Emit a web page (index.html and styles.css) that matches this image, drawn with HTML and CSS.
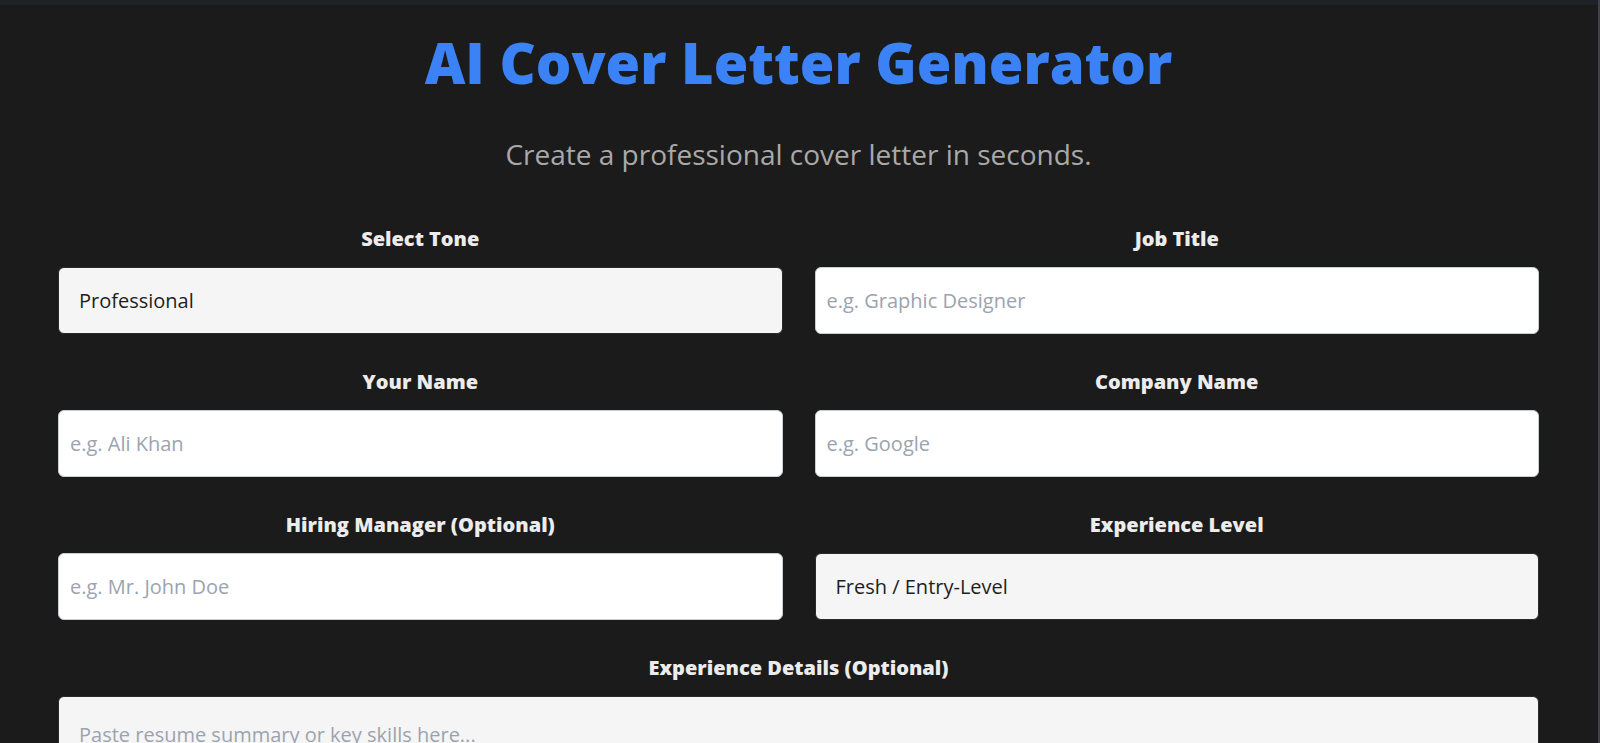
FILE: index.html
```html
<!DOCTYPE html>
<html lang="en">
<head>
<meta charset="utf-8">
<title>AI Cover Letter Generator</title>
<link rel="stylesheet" href="styles.css">
</head>
<body>
<div class="topbar"></div>
<main class="page">
  <h1 class="title">AI Cover Letter Generator</h1>
  <p class="subtitle">Create a professional cover letter in seconds.</p>
  <form class="form">
    <div class="field">
      <label class="label">Select Tone</label>
      <select class="control select">
        <option>Professional</option>
      </select>
    </div>
    <div class="field">
      <label class="label">Job Title</label>
      <input class="control input" type="text" placeholder="e.g. Graphic Designer">
    </div>
    <div class="field">
      <label class="label">Your Name</label>
      <input class="control input" type="text" placeholder="e.g. Ali Khan">
    </div>
    <div class="field">
      <label class="label">Company Name</label>
      <input class="control input" type="text" placeholder="e.g. Google">
    </div>
    <div class="field">
      <label class="label">Hiring Manager (Optional)</label>
      <input class="control input" type="text" placeholder="e.g. Mr. John Doe">
    </div>
    <div class="field">
      <label class="label">Experience Level</label>
      <select class="control select">
        <option>Fresh / Entry-Level</option>
      </select>
    </div>
    <div class="field wide">
      <label class="label">Experience Details (Optional)</label>
      <textarea class="control textarea" placeholder="Paste resume summary or key skills here..."></textarea>
    </div>
  </form>
</main>
</body>
</html>
```

FILE: styles.css
```css
html, body {
  margin: 0;
  padding: 0;
  background: #1b1b1b;
  overflow: hidden;
}

body {
  font-family: "Open Sans", "Noto Sans", "Liberation Sans", sans-serif;
  color: #ececec;
  border-right: 2px solid #3d434b;
  min-height: 743px;
  box-sizing: border-box;
}

.topbar {
  height: 5px;
  background: #1f2329;
}

.page {
  padding: 24px 59px 0 58px;
}

.title {
  margin: 0;
  font-size: 56px;
  line-height: 67px;
  font-weight: 800;
  color: #3b82f6;
  text-align: center;
}

.subtitle {
  margin: 40px 0 0;
  font-size: 28px;
  line-height: 37px;
  font-weight: 400;
  color: #a9a9a9;
  text-align: center;
}

.form {
  margin-top: 52px;
  display: grid;
  grid-template-columns: 1fr 1fr;
  column-gap: 32px;
  row-gap: 34px;
}

.field {
  display: flex;
  flex-direction: column;
}

.field.wide {
  grid-column: 1 / -1;
}

.label {
  font-size: 20px;
  line-height: 27px;
  font-weight: 800;
  color: #ececec;
  text-align: center;
  margin-bottom: 15px;
}

.control {
  box-sizing: border-box;
  height: 67px;
  width: 100%;
  font-family: "Open Sans", "Noto Sans", "Liberation Sans", sans-serif;
  font-size: 20px;
  border-radius: 6px;
  outline: none;
}

.input {
  background: #ffffff;
  border: 1px solid #c9ced6;
  padding: 0 11px;
  color: #222;
}

.input::placeholder {
  color: #9ca3af;
}

.select {
  -webkit-appearance: none;
  appearance: none;
  background-color: #f5f5f5;
  border: 1px solid #2a2a2a;
  padding: 0 20px;
  color: #1e1e1e;
}

.textarea {
  height: 120px;
  background: #f5f5f5;
  border: 1px solid #2a2a2a;
  padding: 24px 20px;
  color: #1e1e1e;
  resize: none;
}

.textarea::placeholder {
  color: #9ca3af;
}
```
